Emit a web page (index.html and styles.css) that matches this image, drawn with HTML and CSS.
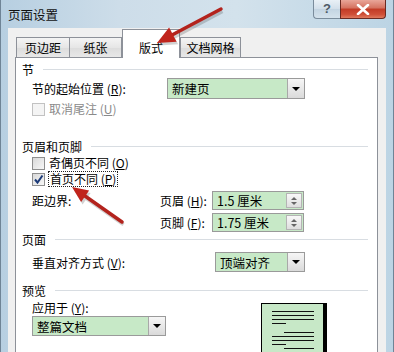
FILE: index.html
```html
<!DOCTYPE html>
<html lang="zh">
<head>
<meta charset="utf-8">
<title>页面设置</title>
<link rel="stylesheet" href="styles.css">
</head>
<body>
<div class="window">
  <div class="titlebar">
    <span class="title">页面设置</span>
    <div class="caption-btns">
      <div class="btn-help">?</div>
      <div class="btn-close">
        <svg width="14" height="11" viewBox="0 0 14 11"><path d="M2 1 L12 10 M12 1 L2 10" stroke="#fff" stroke-width="2.6" stroke-linecap="round"/></svg>
      </div>
    </div>
  </div>
  <div class="dialog">
    <div class="tabs">
      <div class="tab t1">页边距</div>
      <div class="tab t2">纸张</div>
      <div class="tab active t3">版式</div>
      <div class="tab t4">文档网格</div>
    </div>
    <div class="panel">
      <div class="group-head"><span>节</span><i></i></div>
      <div class="row r-start">
        <span class="lbl w135">节的起始位置 (<u>R</u>):</span>
        <div class="combo c-start"><span>新建页</span><b class="drop"><em></em></b></div>
      </div>
      <div class="row r-check disabled">
        <span class="cb cb-dis"></span><span class="ctext">取消尾注 (<u>U</u>)</span>
      </div>

      <div class="group-head g-hf"><span>页眉和页脚</span><i></i></div>
      <div class="row r-check">
        <span class="cb"></span><span class="ctext">奇偶页不同 (<u>O</u>)</span>
      </div>
      <div class="row r-check">
        <span class="cb"><svg width="11" height="11" viewBox="0 0 11 11"><path d="M2 5.5 L4.5 8.5 L9.5 1.5" fill="none" stroke="#1b3a78" stroke-width="2"/></svg></span><span class="ctext focus">首页不同 (<u>P</u>)</span>
      </div>
      <div class="row r-spin first">
        <span class="lbl w128">距边界:</span>
        <span class="lbl w52">页眉 (<u>H</u>):</span>
        <div class="spin"><span>1.5 厘米</span><b class="spinbtn"><em class="up"></em><em class="dn"></em></b></div>
      </div>
      <div class="row r-spin">
        <span class="lbl w128"></span>
        <span class="lbl w52">页脚 (<u>F</u>):</span>
        <div class="spin"><span>1.75 厘米</span><b class="spinbtn"><em class="up"></em><em class="dn"></em></b></div>
      </div>

      <div class="group-head"><span>页面</span><i></i></div>
      <div class="row r-valign">
        <span class="lbl w183">垂直对齐方式 (<u>V</u>):</span>
        <div class="combo c-valign"><span>顶端对齐</span><b class="drop"><em></em></b></div>
      </div>

      <div class="group-head g-prev"><span>预览</span><i></i></div>
      <div class="preview-row">
        <div class="apply">
          <div class="row r-apply"><span class="lbl">应用于 (<u>Y</u>):</span></div>
          <div class="combo c-apply"><span>整篇文档</span><b class="drop"><em></em></b></div>
        </div>
        <div class="page">
          <i class="ln l1"></i><i class="ln l2"></i><i class="ln l3"></i><i class="ln l4 short"></i>
          <i class="ln l5 ind"></i><i class="ln l6"></i><i class="ln l7"></i><i class="ln l8 short"></i>
          <i class="ln l9 ind"></i>
        </div>
      </div>
    </div>
  </div>
  <svg class="arrows" width="394" height="352" viewBox="0 0 394 352">
    <g opacity="0.22" transform="translate(1.5,2.5)">
      <line x1="221" y1="9" x2="172" y2="35" stroke="#333" stroke-width="3.5"/>
      <polygon points="157,43 176.6,41.7 169.1,27.5" fill="#333"/>
      <line x1="122" y1="222" x2="85" y2="196" stroke="#333" stroke-width="3.5"/>
      <polygon points="72,187 89.1,190.5 81.1,201.9" fill="#333"/>
    </g>
    <line x1="221" y1="9" x2="172" y2="35" stroke="#b3231d" stroke-width="3.5" stroke-linecap="round"/>
    <polygon points="157,43 176.6,41.7 169.1,27.5" fill="#c0241c"/>
    <line x1="122" y1="222" x2="85" y2="196" stroke="#b3231d" stroke-width="3.5" stroke-linecap="round"/>
    <polygon points="72,187 89.1,190.5 81.1,201.9" fill="#c0241c"/>
  </svg>
</div>
</body>
</html>
```

FILE: styles.css
```css
* { box-sizing: border-box; }
html, body { margin: 0; padding: 0; }
body {
  width: 394px;
  height: 352px;
  overflow: hidden;
  font-family: "Noto Sans CJK SC", "Liberation Sans", sans-serif;
  font-size: 12px;
  color: #000;
}
u { text-decoration: underline; text-underline-offset: 1px; }

.window {
  position: relative;
  width: 394px;
  height: 352px;
  display: flex;
  flex-direction: column;
  background: linear-gradient(90deg, #b7cfe1 0%, #cddde9 30%, #d3e2ec 60%, #bcd4e4 100%);
  border-left: 1px solid #6f8496;
  border-right: 1px solid #6f8496;
  padding: 0 7px;
}

.titlebar {
  height: 28px;
  display: flex;
  align-items: flex-start;
  flex: none;
}
.title {
  line-height: 30px;
  font-size: 12.5px;
  color: #111;
}
.caption-btns {
  margin-left: auto;
  display: flex;
}
.btn-help {
  width: 27px;
  height: 19px;
  border: 1px solid #7a8c9c;
  border-top: none;
  border-right: none;
  border-radius: 0 0 0 4px;
  background: linear-gradient(#e9f0f6, #d2dfea 50%, #c3d4e2 51%, #d4e2ec);
  color: #4e5a66;
  font-family: "Liberation Sans", sans-serif;
  font-weight: bold;
  font-size: 13px;
  text-align: center;
  line-height: 18px;
}
.btn-close {
  width: 46px;
  height: 19px;
  border: 1px solid #6a2a22;
  border-top: none;
  border-radius: 0 0 4px 0;
  background: linear-gradient(#e9a699, #d4715f 45%, #c23b26 50%, #cf4f37 80%, #e07a5e);
  display: flex;
  align-items: center;
  justify-content: center;
}

.dialog {
  flex: 1;
  background: #f0f0f0;
  padding: 1px 8px 0 7px;
  display: flex;
  flex-direction: column;
}

.tabs {
  height: 28px;
  display: flex;
  align-items: flex-end;
  padding-left: 1px;
  flex: none;
}
.tab {
  height: 20px;
  line-height: 19px;
  text-align: center;
  border: 1px solid #8d9199;
  border-bottom: none;
  background: linear-gradient(#f4f4f4, #e6e6e6 50%, #dcdcdc 51%, #e8e8e8);
  margin-right: -1px;
  position: relative;
}
.t1 { width: 54px; }
.t2 { width: 53px; margin-right: 0; }
.t3 { width: 58px; margin-right: 0; }
.t4 { width: 61px; }
.tab.active {
  height: 29px;
  margin-bottom: -1px;
  padding-top: 8px;
  background: #fff;
  z-index: 2;
}

.panel {
  flex: 1;
  background: #fff;
  border: 1px solid #8d9199;
  border-bottom: none;
  padding: 4px 9px 0 6px;
}

.group-head {
  height: 16px;
  display: flex;
  align-items: center;
  line-height: 16px;
}
.group-head i {
  flex: 1;
  height: 2px;
  margin-left: 9px;
  border-top: 1px solid #d8dde2;
  border-bottom: 1px solid #fff;
}
.g-hf { margin-top: 22px; }
.g-prev { margin-top: 11px; }

.row {
  display: flex;
  align-items: center;
  padding-left: 10px;
}
.lbl { white-space: nowrap; }
.w135 { width: 135px; }
.w128 { width: 128px; }
.w52 { width: 52px; }
.w183 { width: 183px; }

.r-start { height: 21px; }
.r-check { height: 16px; }
.r-check.disabled { margin-top: 2px; color: #8a8a8a; }
.r-spin { height: 19px; }
.r-spin.first { margin-top: 4px; margin-bottom: 3px; }
.r-valign { height: 20px; margin-top: 4px; }

.cb {
  width: 13px;
  height: 13px;
  border: 1px solid #8f8f8f;
  background: linear-gradient(135deg, #d9d9d9, #f7f7f7);
  display: inline-flex;
  align-items: center;
  justify-content: center;
  flex: none;
}
.cb-dis { border-color: #c2c2c2; background: #f4f4f4; }
.ctext { margin-left: 4px; line-height: 14px; }
.focus { outline: 1px dotted #222; outline-offset: 0; padding: 0 1px; }

.combo, .spin {
  height: 21px;
  border: 1px solid #9a9a9a;
  background: #c7e9c7;
  display: flex;
  align-items: center;
  padding-left: 4px;
  font-size: 12.5px;
}
.combo span, .spin span { flex: 1; white-space: nowrap; }
.c-start { width: 138px; }
.c-valign { width: 90px; height: 20px; }
.c-apply { width: 134px; height: 20px; margin-left: 10px; }
.spin { width: 92px; height: 19px; }

.drop {
  width: 17px;
  align-self: stretch;
  border-left: 1px solid #a8a8a8;
  background: linear-gradient(#f6f6f6, #dadada);
  display: flex;
  align-items: center;
  justify-content: center;
}
.drop em {
  width: 0; height: 0;
  border-left: 4px solid transparent;
  border-right: 4px solid transparent;
  border-top: 4px solid #000;
}
.spinbtn {
  width: 16px;
  align-self: stretch;
  margin: 1px;
  border: 1px solid #b4b4b4;
  background: linear-gradient(#f8f8f8, #dedede);
  display: flex;
  flex-direction: column;
  align-items: center;
  justify-content: center;
  gap: 2px;
}
.spinbtn .up {
  width: 0; height: 0;
  border-left: 3px solid transparent;
  border-right: 3px solid transparent;
  border-bottom: 3px solid #666;
}
.spinbtn .dn {
  width: 0; height: 0;
  border-left: 3px solid transparent;
  border-right: 3px solid transparent;
  border-top: 3px solid #666;
}

.preview-row {
  display: flex;
  align-items: flex-start;
}
.apply { width: 239px; }
.r-apply { height: 17px; }
.page {
  margin-top: 4px;
  width: 66px;
  height: 60px;
  border: 1px solid #000;
  border-right: 4px solid #000;
  background: #c7e8c7;
  padding: 7px 9px 0 10px;
  display: flex;
  flex-direction: column;
}
.ln {
  display: block;
  height: 1px;
  background: #111;
  margin-bottom: 3px;
}
.ln.short { width: 14px; }
.ln.ind { margin-left: 12px; }
.l5 { margin-top: 5px; }

.arrows {
  position: absolute;
  left: -1px;
  top: 0;
  z-index: 10;
  pointer-events: none;
}
```
